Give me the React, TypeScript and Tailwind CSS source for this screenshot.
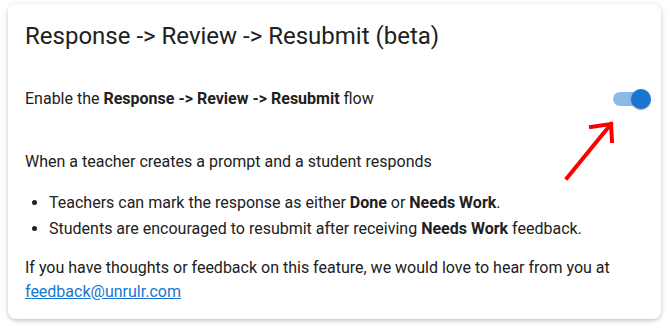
export default function App() {
  return (
    <div className="relative h-[333px] w-[670px] bg-white pt-1 pl-2" style={{ fontFamily: 'Roboto, "Liberation Sans", sans-serif' }}>
      <div className="h-[315px] w-[653px] rounded-lg bg-white pt-4 pl-[17px] pr-[10px] text-[#212121] shadow-[0_2px_4px_-1px_rgba(0,0,0,0.2),0_1px_6px_0_rgba(0,0,0,0.12)]">
        <h1 className="text-2xl leading-8 font-normal">Response -&gt; Review -&gt; Resubmit (beta)</h1>

        <div className="mt-[35px] flex h-6 items-center justify-between">
          <p className="text-base leading-6">
            Enable the <b className="font-bold">Response -&gt; Review -&gt; Resubmit</b> flow
          </p>
          <div className="relative h-[14px] w-[38px]">
            <div className="absolute top-0 left-0 h-[14px] w-[34px] rounded-full bg-[#8cbae8]" />
            <div className="absolute top-[-3px] left-[18px] h-5 w-5 rounded-full bg-[#1976d2] shadow-[0_2px_1px_-1px_rgba(0,0,0,0.2),0_1px_1px_0_rgba(0,0,0,0.14),0_1px_3px_0_rgba(0,0,0,0.12)]" />
          </div>
        </div>

        <p className="mt-[39px] text-base leading-6">When a teacher creates a prompt and a student responds</p>

        <ul className="mt-4 list-disc pl-6 text-base leading-[26px]">
          <li>
            Teachers can mark the response as either <b className="font-bold">Done</b> or <b className="font-bold">Needs Work</b>.
          </li>
          <li>
            Students are encouraged to resubmit after receiving <b className="font-bold">Needs Work</b> feedback.
          </li>
        </ul>

        <p className="mt-[14px] text-base leading-6">
          If you have thoughts or feedback on this feature, we would love to hear from you at
          <br />
          <a href="#" className="text-[#1976d2] underline">feedback@unrulr.com</a>
        </p>
      </div>

      <svg className="pointer-events-none absolute top-0 left-0" width="670" height="333" viewBox="0 0 670 333">
        <g stroke="#ff0000" strokeWidth="4" fill="none" strokeLinecap="square">
          <line x1="567" y1="178" x2="611" y2="124" />
          <polyline points="591,127 611,124 612,141" />
        </g>
      </svg>
    </div>
  );
}
